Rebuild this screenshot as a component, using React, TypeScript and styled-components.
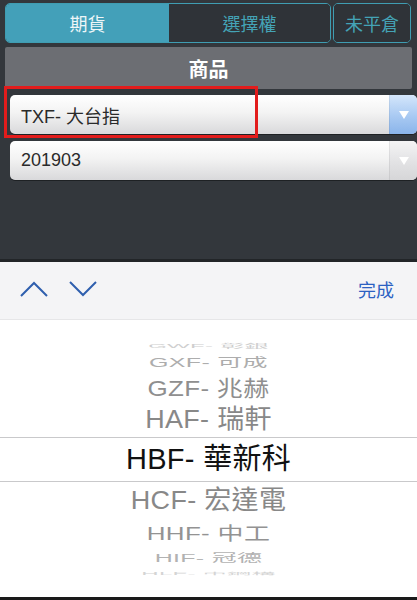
import * as React from 'react';
import styled, { createGlobalStyle, css } from 'styled-components';

const Global = createGlobalStyle`
  html, body { margin: 0; padding: 0; background: #ffffff; }
  body { font-family: "Liberation Sans", "Noto Sans CJK TC", sans-serif; }
`;

const Page = styled.div`
  width: 417px;
  height: 600px;
  display: flex;
  flex-direction: column;
  overflow: hidden;
`;

const Top = styled.div`
  height: 256px;
  background: #33373c;
  border-bottom: 3px solid #222528;
  padding: 3px 5px 0 5px;
  display: flex;
  flex-direction: column;
  gap: 4px;
`;

const Tabs = styled.div`
  display: flex;
  height: 40px;
  gap: 2px;
`;

const TabGroup = styled.div`
  display: flex;
  border: 1.5px solid #3f9db2;
  border-radius: 5px;
  overflow: hidden;
`;

const Tab = styled.div<{ $active?: boolean; $w: number }>`
  width: ${p => p.$w}px;
  display: flex;
  align-items: center;
  justify-content: center;
  font-size: 18px;
  color: #44a3b6;
  background: #2f3338;
  ${p => p.$active && css`
    background: #43a0b9;
    color: #eef6f8;
  `}
`;

const Header = styled.div`
  height: 42px;
  width: 407px;
  background: #6c6e73;
  color: #ffffff;
  font-weight: bold;
  font-size: 20px;
  display: flex;
  align-items: center;
  justify-content: center;
  border-radius: 2px;
`;

const Selects = styled.div`
  display: flex;
  flex-direction: column;
  gap: 7px;
  padding: 2px 0 0 5px;
  margin-right: -5px;
  position: relative;
`;

const Select = styled.div`
  height: 39px;
  display: flex;
  border-radius: 5px;
  overflow: hidden;
  background: linear-gradient(#ffffff, #f3f3f3 45%, #d9d9db);
  box-shadow: 0 1px 0 rgba(0,0,0,0.4);
`;

const SelectText = styled.div`
  flex: 1;
  display: flex;
  align-items: center;
  padding-left: 11px;
  font-size: 18px;
  color: #2a2a2a;
`;

const Arrow = styled.div<{ $blue?: boolean }>`
  width: 27px;
  display: flex;
  align-items: center;
  justify-content: center;
  border-left: 1px solid rgba(0,0,0,0.06);
  background: ${p => p.$blue
    ? 'linear-gradient(#d4e6fb, #a8c9f2 55%, #8ab4ea)'
    : 'linear-gradient(#f4f4f5, #e2e2e4 55%, #d6d6d8)'};
`;

const Highlight = styled.div`
  position: absolute;
  left: -1px;
  top: -7px;
  width: 248px;
  height: 46px;
  border: 3px solid #e21c1c;
`;

const Toolbar = styled.div`
  height: 58px;
  background: #f4f4f6;
  display: flex;
  align-items: center;
  padding: 0 23px 4px 20px;
  box-sizing: border-box;
  border-bottom: 1px solid #e6e6e8;
`;

const Chevrons = styled.div`
  display: flex;
  gap: 21px;
  flex: 1;
`;

const Done = styled.div`
  color: #2c61c2;
  font-size: 18px;
`;

const Picker = styled.div`
  flex: 1;
  background: #ffffff;
  display: flex;
  flex-direction: column;
  padding-top: 19px;
  border-bottom: 3px solid #1a1a1a;
`;

const Row = styled.div<{ $h: number; $selected?: boolean }>`
  height: ${p => p.$h}px;
  flex-shrink: 0;
  box-sizing: border-box;
  display: flex;
  align-items: center;
  justify-content: center;
  overflow: visible;
  ${p => p.$selected && css`
    border-top: 1px solid #c9c9cb;
    border-bottom: 1px solid #c9c9cb;
  `}
`;

const RowText = styled.div<{ $size: number; $color: string }>`
  font-size: ${p => p.$size}px;
  color: ${p => p.$color};
  white-space: nowrap;
  line-height: 1;
  letter-spacing: 0.3px;
`;

const Chevron = ({ up }: { up?: boolean }) => (
  <svg width="28" height="16" viewBox="0 0 28 16">
    <path
      d={up ? 'M1 15 L14 2 L27 15' : 'M1 1 L14 14 L27 1'}
      fill="none"
      stroke="#2f5fae"
      strokeWidth="2"
    />
  </svg>
);

const Tri = () => (
  <svg width="10" height="8" viewBox="0 0 10 8">
    <path d="M0 0 L10 0 L5 8 Z" fill="#ffffff" />
  </svg>
);

const rows = [
  { t: 'GWF- 彰銀', h: 13, size: 24, sy: 0.22, c: '#cfcfcf' },
  { t: 'GXF- 可成', h: 21, size: 25, sy: 0.5, c: '#adadad' },
  { t: 'GZF- 兆赫', h: 29, size: 26, sy: 0.85, c: '#8f8f8f' },
  { t: 'HAF- 瑞軒', h: 35, size: 27, sy: 0.95, c: '#888888' },
  { t: 'HBF- 華新科', h: 45, size: 29, sy: 1, c: '#111111', sel: true },
  { t: 'HCF- 宏達電', h: 36, size: 27, sy: 0.97, c: '#888888' },
  { t: 'HHF- 中工', h: 31, size: 26, sy: 0.72, c: '#939393' },
  { t: 'HIF- 冠德', h: 19, size: 25, sy: 0.45, c: '#b2b2b2' },
  { t: 'HLF- 中鋼構', h: 12, size: 24, sy: 0.15, c: '#d4d4d4' },
];

export default function App() {
  return (
    <Page>
      <Global />
      <Top>
        <Tabs>
          <TabGroup>
            <Tab $active $w={163}>期貨</Tab>
            <Tab $w={161}>選擇權</Tab>
          </TabGroup>
          <TabGroup>
            <Tab $w={76}>未平倉</Tab>
          </TabGroup>
        </Tabs>
        <Header>商品</Header>
        <Selects>
          <Select>
            <SelectText>TXF- 大台指</SelectText>
            <Arrow $blue><Tri /></Arrow>
          </Select>
          <Select>
            <SelectText>201903</SelectText>
            <Arrow><Tri /></Arrow>
          </Select>
          <Highlight />
        </Selects>
      </Top>
      <Toolbar>
        <Chevrons>
          <Chevron up />
          <Chevron />
        </Chevrons>
        <Done>完成</Done>
      </Toolbar>
      <Picker>
        {rows.map(r => (
          <Row key={r.t} $h={r.h} $selected={r.sel}>
            <RowText $size={r.size} $color={r.c} style={{ transform: `scaleY(${r.sy})` }}>
              {r.t}
            </RowText>
          </Row>
        ))}
      </Picker>
    </Page>
  );
}
